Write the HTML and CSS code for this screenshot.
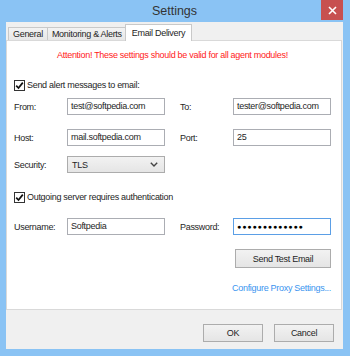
FILE: index.html
```html
<!DOCTYPE html>
<html lang="en">
<head>
    <meta charset="UTF-8">
    <title>Settings</title>
    <link rel="stylesheet" href="styles.css">
</head>
<body>

<div class="window">
    <div class="titlebar">
        <span></span>
        <span class="title">Settings</span>
        <span class="close-btn">
            <svg width="9" height="9" viewBox="0 0 9 9"><path d="M1 1 L8 8 M8 1 L1 8" stroke="#fff" stroke-width="1.6"/></svg>
        </span>
    </div>

    <div class="client">
        <div class="tabs">
            <div class="tab">General</div>
            <div class="tab">Monitoring &amp; Alerts</div>
            <div class="tab active">Email Delivery</div>
        </div>

        <div class="panel">
            <p class="notice">Attention! These settings should be valid for all agent modules!</p>

            <label class="check-row first">
                <span class="checkbox">
                    <svg width="9" height="9" viewBox="0 0 9 9"><path d="M1.2 4.6 L3.5 7 L7.8 1.6" fill="none" stroke="#111" stroke-width="1.7"/></svg>
                </span>
                Send alert messages to email:
            </label>

            <div class="form-grid from-row">
                <span class="label">From:</span>
                <div class="field">test@softpedia.com</div>
                <span></span>
                <span class="label">To:</span>
                <div class="field">tester@softpedia.com</div>
            </div>

            <div class="form-grid host-row">
                <span class="label">Host:</span>
                <div class="field">mail.softpedia.com</div>
                <span></span>
                <span class="label">Port:</span>
                <div class="field">25</div>
            </div>

            <div class="form-grid security-row">
                <span class="label">Security:</span>
                <div class="select">
                    <span>TLS</span>
                    <svg width="8" height="5" viewBox="0 0 8 5"><path d="M0.8 0.8 L4 4 L7.2 0.8" fill="none" stroke="#444" stroke-width="1.4"/></svg>
                </div>
            </div>

            <label class="check-row second">
                <span class="checkbox">
                    <svg width="9" height="9" viewBox="0 0 9 9"><path d="M1.2 4.6 L3.5 7 L7.8 1.6" fill="none" stroke="#111" stroke-width="1.7"/></svg>
                </span>
                Outgoing server requires authentication
            </label>

            <div class="form-grid user-row">
                <span class="label">Username:</span>
                <div class="field">Softpedia</div>
                <span></span>
                <span class="label">Password:</span>
                <div class="field focused password">&#9679;&#9679;&#9679;&#9679;&#9679;&#9679;&#9679;&#9679;&#9679;&#9679;&#9679;&#9679;&#9679;</div>
            </div>

            <div class="test-row">
                <button class="btn test-btn">Send Test Email</button>
            </div>

            <div class="link-row">
                <a href="#" class="proxy-link">Configure Proxy Settings...</a>
            </div>
        </div>

        <div class="footer">
            <button class="btn">OK</button>
            <button class="btn">Cancel</button>
        </div>
    </div>
</div>

</body>
</html>
```

FILE: styles.css
```css
body {
    margin: 0;
    padding: 0;
    font-family: "Segoe UI", "Liberation Sans", Arial, sans-serif;
    font-size: 9px;
    letter-spacing: -0.3px;
    color: #1e1e1e;
}
.window {
    width: 350px;
    height: 356px;
    box-sizing: border-box;
    background-color: #8ac3f4;
    padding: 0 7px 7px 6px;
    display: flex;
    flex-direction: column;
}
.titlebar {
    height: 22px;
    display: grid;
    grid-template-columns: 1fr auto 1fr;
    align-items: start;
}
.title {
    font-size: 12.5px;
    letter-spacing: 0;
    color: #333;
    line-height: 23px;
}
.close-btn {
    justify-self: end;
    width: 22px;
    height: 20px;
    background-color: #c75050;
    display: flex;
    align-items: center;
    justify-content: center;
}
.client {
    flex: 1;
    background-color: #f0f0f0;
    display: flex;
    flex-direction: column;
}
.tabs {
    display: flex;
    align-items: flex-end;
    height: 19px;
    padding-left: 2px;
    margin-bottom: -1px;
}
.tab {
    height: 13px;
    line-height: 13px;
    padding: 0 4px;
    border: 1px solid #c9c9c9;
    border-bottom: none;
    background: linear-gradient(#f3f3f3, #e6e6e6);
    margin-right: -1px;
}
.tab.active {
    height: 16px;
    line-height: 17px;
    padding: 0 6px;
    margin: 0 -1px 0 -1px;
    background: white;
    position: relative;
    z-index: 1;
}
.panel {
    height: 268px;
    background: white;
    border: 1px solid #d9d9d9;
    margin-right: 1px;
    padding: 0 10px 0 7px;
}
.notice {
    margin: 7px 0 0;
    line-height: 14px;
    text-align: center;
    color: #ff1a1a;
}
.check-row {
    display: flex;
    align-items: center;
    gap: 2px;
    height: 14px;
}
.check-row.first {
    margin-top: 16px;
}
.check-row.second {
    margin-top: 17px;
}
.checkbox {
    width: 9px;
    height: 9px;
    border: 1px solid #333;
    background: white;
    display: flex;
}
.form-grid {
    display: grid;
    grid-template-columns: 53px 98px 15px 53px 98px;
    align-items: center;
}
.from-row {
    margin-top: 6px;
}
.host-row {
    margin-top: 14px;
}
.security-row {
    margin-top: 10px;
}
.user-row {
    margin-top: 14px;
}
.field {
    height: 15px;
    line-height: 15px;
    border: 1px solid #abadb3;
    padding: 0 3px;
    background: white;
    white-space: nowrap;
    overflow: hidden;
}
.field.focused {
    border-color: #5b9fe6;
}
.password {
    font-size: 7px;
    letter-spacing: 0.9px;
    color: #000;
}
.select {
    height: 15px;
    border: 1px solid #acacac;
    background: linear-gradient(#f2f2f2, #e5e5e5);
    display: flex;
    align-items: center;
    justify-content: space-between;
    padding: 0 6px 0 4px;
}
.test-row {
    display: flex;
    justify-content: flex-end;
    margin-top: 14px;
}
.btn {
    font-family: inherit;
    font-size: 9px;
    letter-spacing: -0.3px;
    color: #1e1e1e;
    height: 18px;
    border: 1px solid #acacac;
    background: linear-gradient(#f2f2f2, #e5e5e5);
    padding: 0;
    cursor: pointer;
}
.test-btn {
    width: 96px;
    height: 19px;
}
.link-row {
    display: flex;
    justify-content: flex-end;
    margin-top: 13px;
    line-height: 14px;
}
.proxy-link {
    color: #3a94ef;
    text-decoration: none;
}
.footer {
    display: flex;
    justify-content: flex-end;
    gap: 11px;
    padding: 14px 9px 0 0;
}
.footer .btn {
    width: 60px;
}
```
